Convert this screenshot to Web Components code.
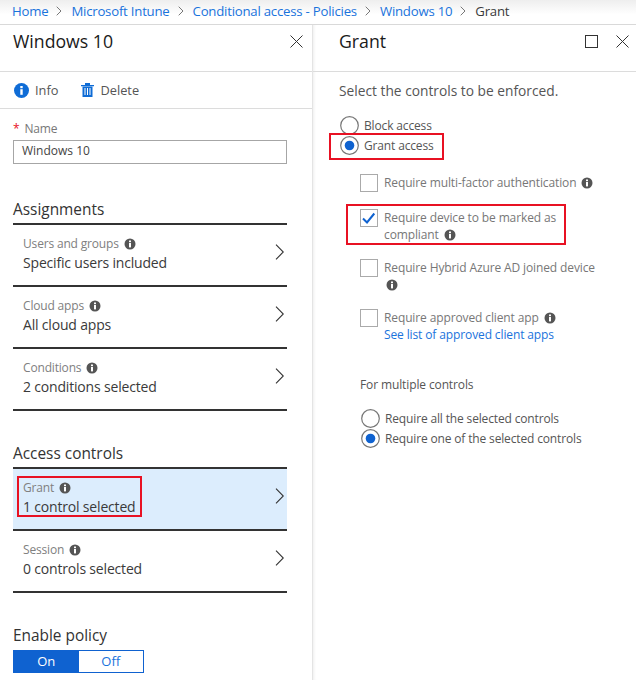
<!DOCTYPE html>
<html>
<head>
<meta charset="utf-8">
<style>
    html, body { margin: 0; padding: 0; background: #fff; }
    body { width: 636px; height: 680px; overflow: hidden; font-family: "Open Sans", "Noto Sans", sans-serif; color: #333; }
    .blades { display: flex; height: 655px; }
</style>
</head>
<body>
<az-breadcrumb></az-breadcrumb>
<div class="blades">
    <az-blade title="Windows 10" width="313" divider>
        <az-toolbar></az-toolbar>
        <az-name-field></az-name-field>
        <section-title style="margin-top:35px">Assignments</section-title>
        <az-row label="Users and groups" value="Specific users included" top></az-row>
        <az-row label="Cloud apps" value="All cloud apps" top></az-row>
        <az-row label="Conditions" value="2 conditions selected" top bottom></az-row>
        <section-title style="margin-top:32px">Access controls</section-title>
        <az-row label="Grant" value="1 control selected" top selected boxed></az-row>
        <az-row label="Session" value="0 controls selected" top bottom></az-row>
        <section-title style="margin-top:32px;margin-bottom:1px">Enable policy</section-title>
        <az-toggle></az-toggle>
    </az-blade>
    <az-blade title="Grant" width="323" maximize>
        <grant-form></grant-form>
    </az-blade>
</div>

<script>
    const INFO_ICON = `<svg width="12" height="12" viewBox="0 0 12 12"><circle cx="6" cy="6" r="5.5" fill="#555"/><rect x="5" y="5" width="2" height="4.4" fill="#fff"/><rect x="5" y="2.5" width="2" height="1.7" fill="#fff"/></svg>`;

    class AzBreadcrumb extends HTMLElement {
        constructor() {
            super();
            const crumbs = ['Home', 'Microsoft Intune', 'Conditional access - Policies', 'Windows 10'];
            const sep = `<svg class="sep" width="6" height="10" viewBox="0 0 6 10"><path d="M.7.7 5 5 .7 9.3" fill="none" stroke="#777" stroke-width="1"/></svg>`;
            let root = this.attachShadow({mode: 'open'});
            root.innerHTML = `
                <style>
                    :host { display: flex; align-items: center; height: 25px; padding: 0 0 3px 12px; box-sizing: border-box;
                        font-size: 13.2px; letter-spacing: -.22px; color: #3a3a3a; background: linear-gradient(#eeeeee, #fff 60%);
                        border-bottom: 1px solid #d9d9d9; white-space: nowrap; }
                    a { color: #1a73dc; text-decoration: none; }
                    .sep { margin: 1px 9px 0 8px; }
                </style>
                ${crumbs.map(c => `<a>${c}</a>${sep}`).join('')}<span>Grant</span>
            `;
        }
    }

    class AzBlade extends HTMLElement {
        constructor() {
            super();
            let root = this.attachShadow({mode: 'open'});
            let close = `<svg width="13" height="13" viewBox="0 0 13 13"><path d="M.5.5l12 12M12.5.5l-12 12" stroke="#333" fill="none"/></svg>`;
            let max = this.hasAttribute('maximize')
                ? `<svg width="13" height="13" viewBox="0 0 13 13"><rect x=".5" y=".5" width="12" height="12" fill="none" stroke="#333"/></svg>` : '';
            root.innerHTML = `
                <style>
                    :host { display: block; box-sizing: border-box; width: ${this.getAttribute('width')}px; }
                    :host([divider]) { border-right: 1px solid #e4e4e4; }
                    :host([maximize]) { box-shadow: inset 3px 0 3px -2px #eeeeee; }
                    header { display: flex; align-items: flex-start; justify-content: space-between; box-sizing: border-box; height: 47px;
                        padding: 3px var(--pad-r, 9px) 0 var(--pad, 13px); border-bottom: 1px solid #dcdcdc; }
                    :host([maximize]) header { --pad: 26px; --pad-r: 7px; }
                    h1 { margin: 0; font-size: 17.7px; line-height: 26px; font-weight: 400; color: #1a1a1a; }
                    .ctl { display: flex; gap: 18px; margin-top: 7px; }
                </style>
                <header><h1>${this.getAttribute('title')}</h1><div class="ctl">${max}${close}</div></header>
                <slot></slot>
            `;
            this.removeAttribute('title');
        }
    }

    class AzToolbar extends HTMLElement {
        constructor() {
            super();
            this.attachShadow({mode: 'open'}).innerHTML = `
                <style>
                    :host { display: flex; align-items: center; box-sizing: border-box; height: 37px; padding-left: 14px;
                        border-bottom: 1px solid #dcdcdc; font-size: 12.8px; color: #555; }
                    span { display: flex; align-items: center; gap: 6px; margin-right: 23px; }
                </style>
                <span><svg width="15" height="15" viewBox="0 0 15 15"><circle cx="7.5" cy="7.5" r="7.5" fill="#0f6cd6"/><rect x="6.3" y="6.2" width="2.4" height="5.6" fill="#fff"/><rect x="6.3" y="3" width="2.4" height="2.2" fill="#fff"/></svg>Info</span>
                <span><svg width="13" height="14" viewBox="0 0 13 14"><path d="M0 2h13v1.2H0zM4 0h5v2H4z" fill="#0f6cd6"/><path d="M1.5 3.5h10V14h-10z" fill="#0f6cd6"/><path d="M4 5v7M6.5 5v7M9 5v7" stroke="#fff"/></svg>Delete</span>
            `;
        }
    }

    class AzNameField extends HTMLElement {
        constructor() {
            super();
            this.attachShadow({mode: 'open'}).innerHTML = `
                <style>
                    :host { display: block; padding: 11px 25px 0 13px; }
                    label { display: block; font-size: 12px; letter-spacing: -.2px; line-height: 17px; color: #777; margin-bottom: 3px; }
                    b { color: #e81123; font-weight: 400; margin-right: 5px; }
                    .input { box-sizing: border-box; height: 24px; border: 1px solid #a6a6a6; padding-left: 8px;
                        font-size: 12px; line-height: 20px; color: #444; }
                </style>
                <label><b>*</b>Name</label>
                <div class="input">Windows 10</div>
            `;
        }
    }

    class SectionTitle extends HTMLElement {
        constructor() {
            super();
            this.attachShadow({mode: 'open'}).innerHTML = `
                <style>
                    :host { display: block; margin: 0 25px 0 13px; font-size: 15.4px; line-height: 22px; color: #333; padding-bottom: 2px; }
                </style>
                <slot></slot>
            `;
        }
    }

    class AzRow extends HTMLElement {
        constructor() {
            super();
            let boxed = this.hasAttribute('boxed');
            this.attachShadow({mode: 'open'}).innerHTML = `
                <style>
                    :host { display: flex; align-items: center; justify-content: space-between; box-sizing: content-box; height: 60px;
                        margin: 0 25px 0 13px; padding-left: 10px; padding-right: 3px; }
                    :host([top]) { border-top: 2px solid #333; }
                    :host([bottom]) { border-bottom: 2px solid #333; }
                    :host([selected]) { background: #dcedfd; }
                    .text { position: relative; margin-top: -2px; }
                    .label { display: flex; align-items: center; gap: 5px; font-size: 12px; letter-spacing: -.17px; line-height: 18px; color: #808080; }
                    .value { font-size: 14px; letter-spacing: -.18px; line-height: 20px; color: #3a3a3a; }
                    .box { position: absolute; inset: -3px -7px 0 -6px; border: 2px solid #e81123; }
                    svg.chev { margin-top: -6px; }
                </style>
                <div class="text">
                    <div class="label">${this.getAttribute('label')}${INFO_ICON}</div>
                    <div class="value">${this.getAttribute('value')}</div>
                    ${boxed ? '<div class="box"></div>' : ''}
                </div>
                <svg class="chev" width="9" height="16" viewBox="0 0 9 16"><path d="M1 .7l7.3 7.3L1 15.3" fill="none" stroke="#333" stroke-width="1.1"/></svg>
            `;
        }
    }

    class AzToggle extends HTMLElement {
        constructor() {
            super();
            this.attachShadow({mode: 'open'}).innerHTML = `
                <style>
                    :host { display: flex; width: 131px; height: 23px; box-sizing: border-box; margin-left: 13px;
                        border: 1px solid #0f62d0; font-size: 13px; line-height: 20px; text-align: center; }
                    div { flex: 1; }
                    .on { background: #0f62d0; color: #fff; }
                    .off { color: #1a73dc; }
                </style>
                <div class="on">On</div><div class="off">Off</div>
            `;
        }
    }

    class AzRadio extends HTMLElement {
        constructor() {
            super();
            this.attachShadow({mode: 'open'}).innerHTML = `
                <style>
                    :host { display: flex; align-items: center; gap: 5px; height: 20px; font-size: 12px; letter-spacing: -.15px; color: #555; }
                    svg { flex: none; margin-left: 1px; }
                </style>
                <svg width="19" height="19" viewBox="0 0 19 19"><circle cx="9.5" cy="9.5" r="8.8" fill="#fff" stroke="#777" stroke-width="1.2"/>${this.hasAttribute('checked') ? '<circle cx="9.5" cy="9.5" r="4.8" fill="#0f62d0"/>' : ''}</svg>
                <slot></slot>
            `;
        }
    }

    class AzCheck extends HTMLElement {
        constructor() {
            super();
            this.attachShadow({mode: 'open'}).innerHTML = `
                <style>
                    :host { display: flex; gap: 6px; font-size: 12px; letter-spacing: -.12px; line-height: 17px; color: #777; }
                    svg { flex: none; }
                    .text { width: 218px; }
                </style>
                <svg width="18" height="18" viewBox="0 0 18 18"><rect x=".5" y=".5" width="17" height="17" fill="#fff" stroke="#aaa"/>${this.hasAttribute('checked') ? '<path d="M3 9.5 7 13.5l7.3-9" fill="none" stroke="#0f62d0" stroke-width="2"/>' : ''}</svg>
                <div class="text"><slot></slot></div>
            `;
        }
    }

    class RedBox extends HTMLElement {
        constructor() {
            super();
            this.attachShadow({mode: 'open'}).innerHTML = `
                <style>
                    :host { display: block; position: relative; }
                    .box { position: absolute; inset: var(--inset); border: 2px solid #e81123; pointer-events: none; }
                </style>
                <slot></slot><div class="box"></div>
            `;
        }
    }

    class GrantForm extends HTMLElement {
        constructor() {
            super();
            const info = `<span class="i">${INFO_ICON}</span>`;
            this.attachShadow({mode: 'open'}).innerHTML = `
                <style>
                    :host { display: block; padding: 9px 0 0 26px; }
                    p { margin: 0; font-size: 13.75px; line-height: 20px; color: #555; }
                    .access { margin-top: 14px; }
                    .checks { display: flex; flex-direction: column; margin: 19px 0 0 21px; }
                    .i { display: inline-block; line-height: 0; vertical-align: -2px; margin-left: 2px; }
                    .i svg { display: block; }
                    a { color: #1a73dc; text-decoration: none; }
                    .multi { margin: 33px 0 0 21px; font-size: 12px; letter-spacing: -.12px; line-height: 17px; color: #555; }
                    .multi div { margin-bottom: 15px; }
                    .mt1 { margin-top: 17px; } .mt2 { margin-top: 16px; }
                </style>
                <p>Select the controls to be enforced.</p>
                <div class="access">
                    <az-radio>Block access</az-radio>
                    <red-box style="--inset:-2px 192px -5px -10px"><az-radio checked>Grant access</az-radio></red-box>
                </div>
                <div class="checks">
                    <az-check>Require multi-factor authentication ${info}</az-check>
                    <red-box class="mt1" style="--inset:-5px 70px -2px -14px"><az-check checked>Require device to be marked as compliant ${info}</az-check></red-box>
                    <az-check class="mt2">Require Hybrid Azure AD joined device ${info}</az-check>
                    <az-check class="mt2">Require approved client app ${info}<br><a>See list of approved client apps</a></az-check>
                </div>
                <div class="multi">
                    <div>For multiple controls</div>
                    <az-radio>Require all the selected controls</az-radio>
                    <az-radio checked>Require one of the selected controls</az-radio>
                </div>
            `;
        }
    }

    customElements.define('az-breadcrumb', AzBreadcrumb);
    customElements.define('az-blade', AzBlade);
    customElements.define('az-toolbar', AzToolbar);
    customElements.define('az-name-field', AzNameField);
    customElements.define('section-title', SectionTitle);
    customElements.define('az-row', AzRow);
    customElements.define('az-toggle', AzToggle);
    customElements.define('az-radio', AzRadio);
    customElements.define('az-check', AzCheck);
    customElements.define('red-box', RedBox);
    customElements.define('grant-form', GrantForm);
</script>
</body>
</html>
